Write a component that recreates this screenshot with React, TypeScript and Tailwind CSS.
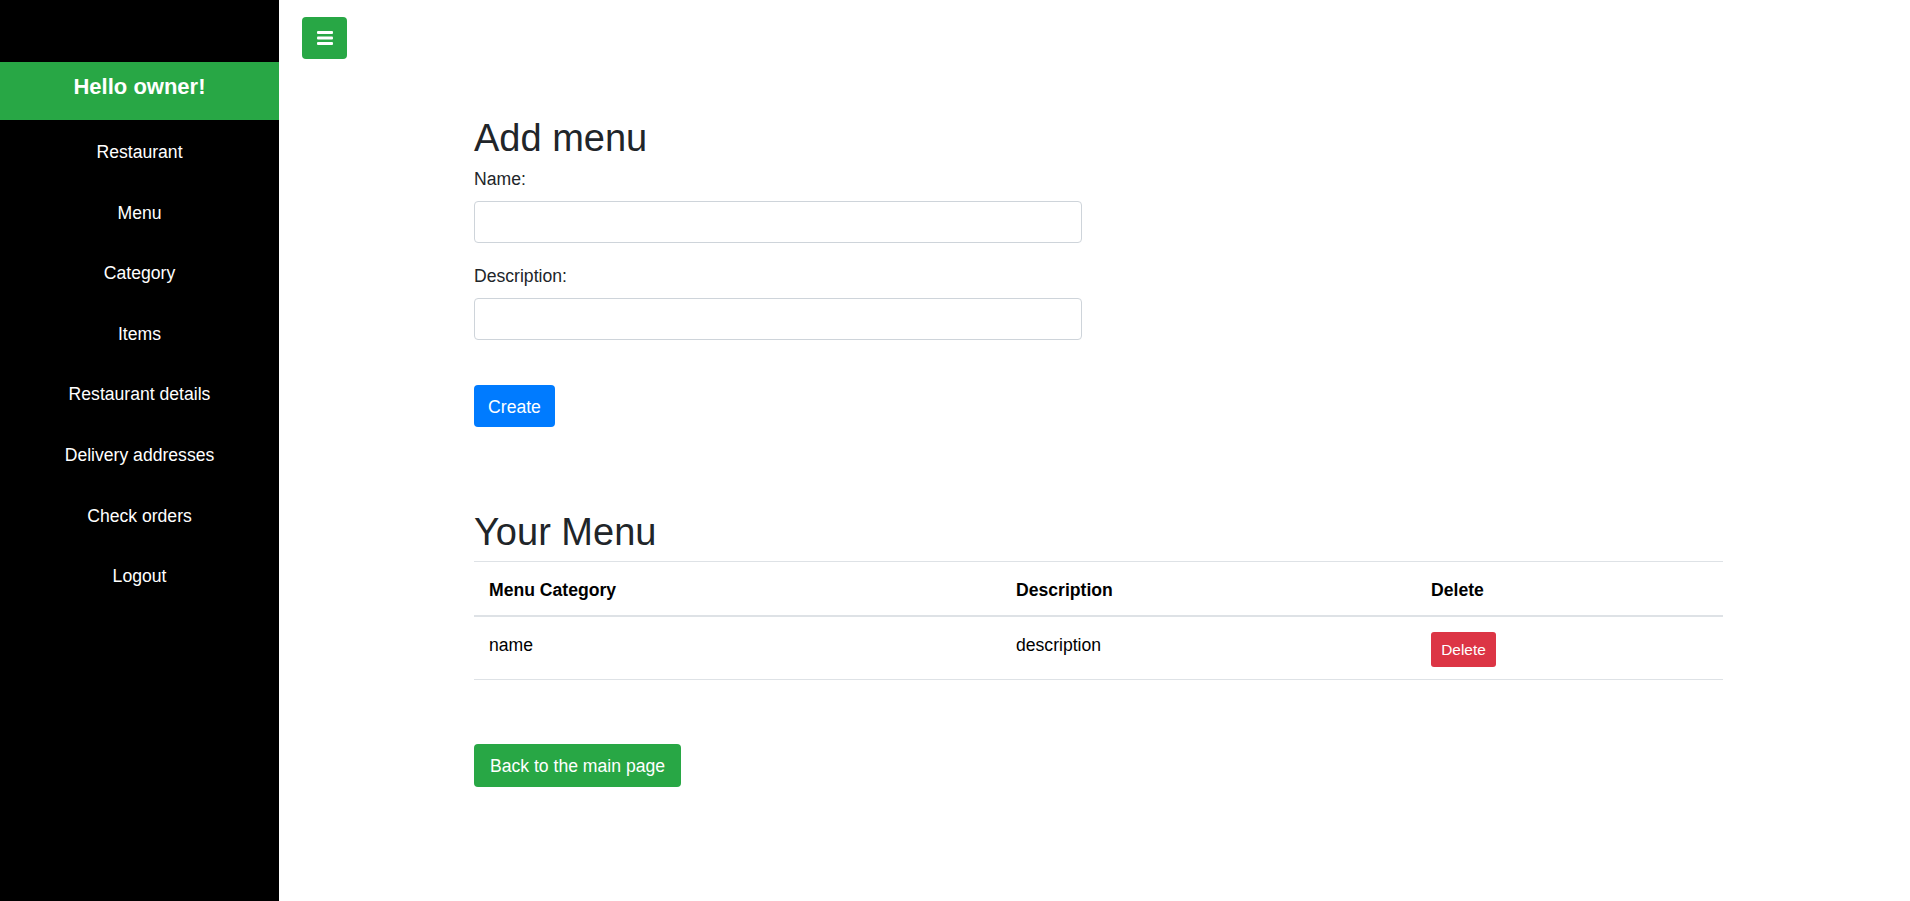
const navItems = [
  "Restaurant",
  "Menu",
  "Category",
  "Items",
  "Restaurant details",
  "Delivery addresses",
  "Check orders",
  "Logout",
]

const menus = [{ id: 1, name: "name", description: "description" }]

export default function App() {
  return (
    <div className="flex h-[901px] bg-white font-['Liberation_Sans',Arial,sans-serif] text-[#212529]">
      <aside className="w-[279px] shrink-0 bg-black">
        <div className="h-[62px]" />
        <div className="h-[58px] bg-[#28a745] pt-[12px] text-center text-[22px] font-bold leading-[26.4px] text-white">
          Hello owner!
        </div>
        <nav className="flex flex-col pt-[2px]">
          {navItems.map((item) => (
            <a
              key={item}
              href="#"
              className="flex h-[60.6px] items-center justify-center text-[17.6px] leading-[26.4px] text-white"
            >
              {item}
            </a>
          ))}
        </nav>
      </aside>

      <main className="flex-1">
        <div className="pl-[23px] pt-[17px]">
          <button className="flex h-[42px] w-[45px] items-center justify-center rounded-[4px] bg-[#28a745]">
            <svg width="16" height="14" viewBox="0 0 16 14" fill="#fff">
              <rect x="0" y="0" width="16" height="3" rx="1" />
              <rect x="0" y="5.5" width="16" height="3" rx="1" />
              <rect x="0" y="11" width="16" height="3" rx="1" />
            </svg>
          </button>
        </div>

        <div className="ml-[195px] w-[1249px]">
          <h1 className="mt-[57px] mb-[4px] text-[38px] font-medium leading-[45.6px]">Add menu</h1>
          <form className="w-[608px]">
            <label className="mb-[9px] block text-[17.6px] leading-[26.4px]">Name:</label>
            <input
              type="text"
              className="block h-[42px] w-full rounded-[4px] border border-[#ced4da] bg-white px-[13px] text-[17.6px]"
            />
            <label className="mt-[20px] mb-[9px] block text-[17.6px] leading-[26.4px]">Description:</label>
            <input
              type="text"
              className="block h-[42px] w-full rounded-[4px] border border-[#ced4da] bg-white px-[13px] text-[17.6px]"
            />
            <button
              type="button"
              className="mt-[45px] flex h-[42px] w-[81px] items-center justify-center rounded-[4px] bg-[#007bff] pt-[1px] text-[17.6px] text-white"
            >
              Create
            </button>
          </form>

          <h1 className="mt-[83px] mb-[5px] text-[38px] font-medium leading-[45.6px]">Your Menu</h1>
          <table className="w-full border-collapse text-left text-[17.6px] leading-[26.4px] text-black">
            <thead>
              <tr className="border-t border-[#dee2e6]">
                <th className="w-[527px] border-b-2 border-[#dee2e6] px-[15px] pt-[15px] pb-[12px] align-bottom font-bold">
                  Menu Category
                </th>
                <th className="w-[415px] border-b-2 border-[#dee2e6] px-[15px] pt-[15px] pb-[12px] align-bottom font-bold">
                  Description
                </th>
                <th className="border-b-2 border-[#dee2e6] px-[15px] pt-[15px] pb-[12px] align-bottom font-bold">
                  Delete
                </th>
              </tr>
            </thead>
            <tbody>
              {menus.map((m) => (
                <tr key={m.id} className="border-b border-[#dee2e6]">
                  <td className="px-[15px] pt-[15px] pb-[12px] align-top">{m.name}</td>
                  <td className="px-[15px] pt-[15px] pb-[12px] align-top">{m.description}</td>
                  <td className="px-[15px] pt-[15px] pb-[12px] align-top">
                    <button className="flex h-[35px] w-[65px] items-center justify-center rounded-[3px] bg-[#dc3545] text-[15.4px] text-white">
                      Delete
                    </button>
                  </td>
                </tr>
              ))}
            </tbody>
          </table>

          <button className="mt-[64px] flex h-[43px] w-[207px] items-center justify-center rounded-[4px] bg-[#28a745] pt-[1px] text-[17.6px] text-white">
            Back to the main page
          </button>
        </div>
      </main>
    </div>
  )
}
